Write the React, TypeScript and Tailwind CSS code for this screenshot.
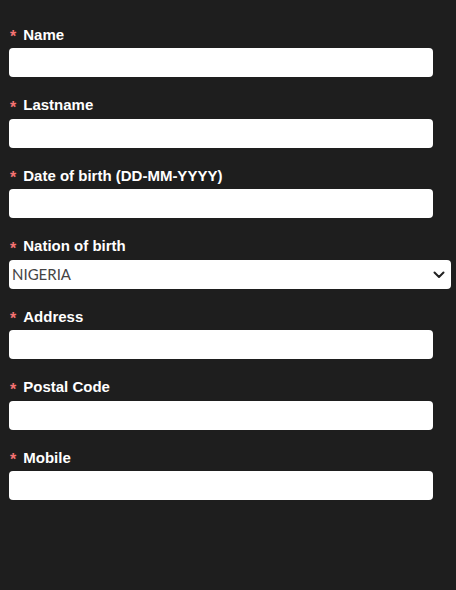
import { useState } from "react";

const fields = [
    { id: "name", label: "Name" },
    { id: "lastname", label: "Lastname" },
    { id: "dob", label: "Date of birth (DD-MM-YYYY)" },
    { id: "nation", label: "Nation of birth", select: true },
    { id: "address", label: "Address" },
    { id: "postal", label: "Postal Code" },
    { id: "mobile", label: "Mobile" },
];

const App = () => {
    const [values, setValues] = useState<Record<string, string>>({ nation: "NIGERIA" });

    const update = (id: string, v: string) => setValues((prev) => ({ ...prev, [id]: v }));

    return (
        <div
            className="min-h-[590px] w-full bg-[#1e1e1e] px-[9px] pt-[25px]"
            style={{ fontFamily: '"Liberation Sans", Arial, sans-serif' }}
        >
            {fields.map((f) => (
                <div key={f.id} className="mb-[18.5px]">
                    <label className="flex h-[20px] items-center text-[15px] font-bold text-white mb-[3px]">
                        <span className="text-[#f47272] text-[16px] ml-[1px] mr-[7px] leading-none pt-[4px]">*</span>
                        {f.label}
                    </label>
                    {f.select ? (
                        <div className="relative w-[442px]">
                            <select
                                value={values[f.id]}
                                onChange={(e) => update(f.id, e.target.value)}
                                className="block h-[29px] w-full appearance-none rounded-[4px] bg-white pl-[3px] text-[15px] text-[#444] outline-none"
                                style={{ fontFamily: "Lato, sans-serif" }}
                            >
                                <option value="NIGERIA">NIGERIA</option>
                                <option value="GHANA">GHANA</option>
                                <option value="ITALY">ITALY</option>
                            </select>
                            <svg
                                className="pointer-events-none absolute right-[6px] top-[11px] h-[8px] w-[12px]"
                                viewBox="0 0 12 8"
                                fill="none"
                            >
                                <path d="M1.5 1.5 6 6l4.5-4.5" stroke="#222" strokeWidth="2" strokeLinecap="round" strokeLinejoin="round" />
                            </svg>
                        </div>
                    ) : (
                        <input
                            value={values[f.id] ?? ""}
                            onChange={(e) => update(f.id, e.target.value)}
                            className="block h-[29px] w-[424px] rounded-[4px] bg-white px-[6px] text-[14px] text-[#333] outline-none"
                        />
                    )}
                </div>
            ))}
        </div>
    );
};

export default App;
